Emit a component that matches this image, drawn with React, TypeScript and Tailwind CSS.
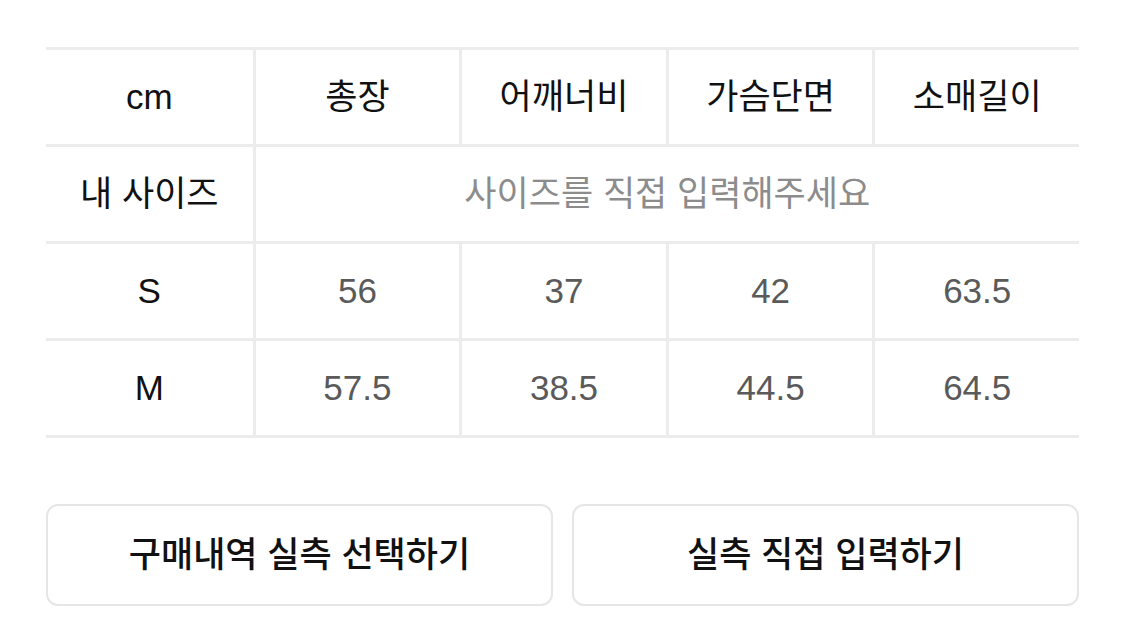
const headers = ["cm", "총장", "어깨너비", "가슴단면", "소매길이"];

const rows = [
  { size: "S", values: ["56", "37", "42", "63.5"] },
  { size: "M", values: ["57.5", "38.5", "44.5", "64.5"] },
];

const cell =
  "flex h-[97px] items-center justify-center border-t-[3px] border-[#ececec]";

export default function App() {
  return (
    <div
      className="h-[618px] w-[1125px] bg-white px-[46px] pt-[47px]"
      style={{ fontFamily: '"Liberation Sans", "Noto Sans CJK KR", sans-serif' }}
    >
      {/* Size table */}
      <div className="grid grid-cols-5 border-b-[3px] border-[#ececec]">
        {headers.map((h, i) => (
          <div
            key={h}
            className={`${cell} text-[35px] text-[#111] ${i > 0 ? "border-l-[3px]" : ""}`}
          >
            {h}
          </div>
        ))}

        <div className={`${cell} text-[35px] text-[#111]`}>내 사이즈</div>
        <div className={`${cell} col-span-4 border-l-[3px] text-[35px] text-[#8c8c8c]`}>
          사이즈를 직접 입력해주세요
        </div>

        {rows.map((r) => (
          <>
            <div key={r.size} className={`${cell} text-[35px] text-[#111]`}>
              {r.size}
            </div>
            {r.values.map((v, i) => (
              <div
                key={r.size + i}
                className={`${cell} border-l-[3px] text-[35px] text-[#5a5a5a]`}
              >
                {v}
              </div>
            ))}
          </>
        ))}
      </div>

      {/* Buttons */}
      <div className="mt-[66px] flex gap-[19px]">
        <button className="flex h-[102px] flex-1 items-center justify-center rounded-[12px] border-2 border-[#e6e6e6] text-[35px] font-medium text-[#111]">
          구매내역 실측 선택하기
        </button>
        <button className="flex h-[102px] flex-1 items-center justify-center rounded-[12px] border-2 border-[#e6e6e6] text-[35px] font-medium text-[#111]">
          실측 직접 입력하기
        </button>
      </div>
    </div>
  );
}
